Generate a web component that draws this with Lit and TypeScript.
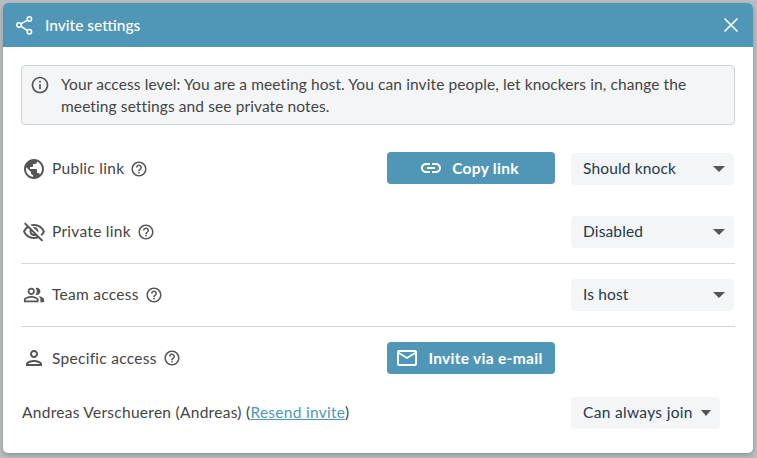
import { LitElement, html, css } from "lit";
import { customElement } from "lit/decorators.js";

const help = html`<svg class="help" viewBox="0 0 24 24"><path fill="#555" d="M11 18h2v-2h-2v2zm1-16C6.48 2 2 6.48 2 12s4.48 10 10 10 10-4.48 10-10S17.52 2 12 2zm0 18c-4.41 0-8-3.59-8-8s3.59-8 8-8 8 3.59 8 8-3.59 8-8 8zm0-14c-2.21 0-4 1.79-4 4h2c0-1.1.9-2 2-2s2 .9 2 2c0 2-3 1.75-3 5h2c0-2.25 3-2.5 3-5 0-2.21-1.79-4-4-4z"/></svg>`;

const icon = (d: string, small = false) => html`<svg class="ri ${small ? "small" : ""}" viewBox="0 0 24 24"><path fill="#555" d=${d}/></svg>`;
const GLOBE = "M12 2C6.48 2 2 6.48 2 12s4.48 10 10 10 10-4.48 10-10S17.52 2 12 2zm-1 17.93c-3.95-.49-7-3.85-7-7.93 0-.62.08-1.21.21-1.79L9 15v1c0 1.1.9 2 2 2v1.93zm6.9-2.54c-.26-.81-1-1.39-1.9-1.39h-1v-3c0-.55-.45-1-1-1H8v-2h2c.55 0 1-.45 1-1V7h2c1.1 0 2-.9 2-2v-.41c2.93 1.19 5 4.06 5 7.41 0 2.08-.8 3.97-2.1 5.39z";
const EYE_OFF = "M12 6c3.79 0 7.17 2.13 8.82 5.5-.59 1.22-1.42 2.27-2.41 3.12l1.41 1.41c1.39-1.23 2.49-2.77 3.18-4.53C21.27 7.11 17 4 12 4c-1.27 0-2.49.2-3.64.57l1.65 1.65C10.66 6.09 11.32 6 12 6zm-1.07 1.14L13 9.21c.57.25 1.03.71 1.28 1.28l2.07 2.07c.08-.34.14-.7.14-1.07C16.5 9.01 14.48 7 12 7c-.37 0-.72.05-1.07.14zM2.01 3.87l2.68 2.68C3.06 7.83 1.77 9.53 1 11.5 2.73 15.89 7 19 12 19c1.52 0 2.98-.29 4.32-.82l3.42 3.42 1.41-1.41L3.42 2.45 2.01 3.87zm7.5 7.5l2.61 2.61c-.04.01-.08.02-.12.02-1.38 0-2.5-1.12-2.5-2.5 0-.05.01-.08.01-.13zm-3.4-3.4l1.75 1.75c-.23.55-.36 1.15-.36 1.78 0 2.48 2.02 4.5 4.5 4.5.63 0 1.23-.13 1.77-.36l.98.98c-.88.24-1.8.38-2.75.38-3.79 0-7.17-2.13-8.82-5.5.7-1.43 1.72-2.61 2.93-3.53z";
const PEOPLE = "M16.67 13.13C18.04 14.06 19 15.32 19 17v3h4v-3c0-2.18-3.57-3.47-6.33-3.87zM15 12c2.21 0 4-1.79 4-4s-1.79-4-4-4c-.47 0-.91.1-1.33.24C14.5 5.27 15 6.58 15 8s-.5 2.73-1.33 3.76c.42.14.86.24 1.33.24zM9 12c2.21 0 4-1.79 4-4s-1.79-4-4-4-4 1.79-4 4 1.79 4 4 4zm0-6c1.1 0 2 .9 2 2s-.9 2-2 2-2-.9-2-2 .9-2 2-2zm0 7c-2.67 0-8 1.34-8 4v3h16v-3c0-2.66-5.33-4-8-4zm6 5H3v-.99C3.2 16.29 6.3 15 9 15s5.8 1.29 6 2v1z";
const PERSON = "M12 6c1.1 0 2 .9 2 2s-.9 2-2 2-2-.9-2-2 .9-2 2-2m0 10c2.7 0 5.8 1.29 6 2H6c.23-.72 3.31-2 6-2m0-12C9.79 4 8 5.79 8 8s1.79 4 4 4 4-1.79 4-4-1.79-4-4-4zm0 10c-2.67 0-8 1.34-8 4v2h16v-2c0-2.66-5.33-4-8-4z";

@customElement("app-root")
export class AppRoot extends LitElement {
  static styles = css`
    :host { display: block; width: 757px; height: 458px; box-sizing: border-box; padding: 3px 4px 5px 3px; background: #b9bfc1; font-family: "Lato", sans-serif; overflow: hidden; }
    * { box-sizing: border-box; }
    .dialog { height: 450px; background: #fff; border-radius: 5px; overflow: hidden; box-shadow: 0 2px 5px rgba(0,0,0,.25); }
    .head { height: 44px; background: #5097b7; color: #fff; display: flex; align-items: center; padding: 0 14px 0 12px; font-size: 15.5px; font-weight: 500; letter-spacing: 0; }
    .head .share { width: 20px; height: 20px; margin-right: 10px; flex: none; }
    .head .title { flex: 1; padding-bottom: 1px; }
    .head .close { width: 16px; height: 16px; }
    .body { padding: 18px 18px 0; }
    .notice { height: 60px; background: #f3f5f7; border: 1px solid #cdd4d8; border-radius: 4px; display: flex; padding: 7px 10px 0 8px; color: #444; font-size: 15.5px; line-height: 22px; letter-spacing: .1px; }
    .notice svg { width: 20px; height: 20px; margin: 2px 11px 0 0; flex: none; }
    .row { display: grid; grid-template-columns: 350px 168px 163px; column-gap: 16px; align-items: center; font-size: 15.5px; letter-spacing: .15px; color: #444; padding: 16px 0 15px; }
    .row.first { margin-top: 12px; }
    .row.first .btn { margin: -1px 0 1px; }
    .row.sep { border-top: 1px solid #d2d8db; padding-top: 15px; }
    .cell { height: 32px; }
    .label { display: flex; align-items: center; height: 32px; letter-spacing: .28px; }
    .label .txt { padding-bottom: 2px; }
    .row.low .label .txt { padding-bottom: 0; }
    .ri { width: 24px; height: 24px; margin: 0 6px 0 1px; flex: none; }
    .ri.small { width: 22px; height: 22px; margin: 0 7px 0 2px; }
    .help { width: 18px; height: 18px; margin-left: 6px; flex: none; }
    .btn { height: 32px; background: #5097b7; color: #fff; border-radius: 4px; display: flex; align-items: center; justify-content: center; font-weight: 700; padding-right: 4px; letter-spacing: .3px; }
    .btn svg { width: 24px; height: 24px; margin-right: 9px; flex: none; }
    .btn .txt { padding-bottom: 1px; }
    .sel { height: 32px; background: #f3f5f7; border-radius: 4px; color: #1f3a4a; display: flex; align-items: center; justify-content: space-between; padding: 0 9px 2px 12px; }
    .caret { width: 0; height: 0; margin-top: 2px; border-left: 6px solid transparent; border-right: 6px solid transparent; border-top: 6px solid #555; }
    .person { display: flex; align-items: center; justify-content: space-between; font-size: 15.5px; letter-spacing: .28px; color: #444; margin-top: 8px; padding: 0 15px 0 1px; }
    .person .who { padding-bottom: 2px; }
    .person a { color: #5097b7; }
    .sel.small { width: 149px; flex: none; letter-spacing: .32px; }
    .sel.small .caret { border-left-width: 5.5px; border-right-width: 5.5px; }
  `;

  private row(ic: unknown, label: string, mid: unknown, value: string | null, cls = "") {
    return html`<div class="row ${cls}">
      <div class="label">${ic}<span class="txt">${label}</span>${help}</div>
      <div class="cell">${mid}</div>
      <div class="cell">${value ? html`<div class="sel"><span>${value}</span><span class="caret"></span></div>` : ""}</div>
    </div>`;
  }

  render() {
    const copy = html`<div class="btn"><svg viewBox="0 0 24 24"><path fill="#fff" d="M3.9 12c0-1.71 1.39-3.1 3.1-3.1h4V7H7c-2.76 0-5 2.24-5 5s2.24 5 5 5h4v-1.9H7c-1.71 0-3.1-1.39-3.1-3.1zM8 13h8v-2H8v2zm9-6h-4v1.9h4c1.71 0 3.1 1.39 3.1 3.1s-1.39 3.1-3.1 3.1h-4V17h4c2.76 0 5-2.24 5-5s-2.24-5-5-5z"/></svg><span class="txt">Copy link</span></div>`;
    const mail = html`<div class="btn"><svg viewBox="0 0 24 24"><path fill="#fff" d="M20 4H4c-1.1 0-1.99.9-1.99 2L2 18c0 1.1.9 2 2 2h16c1.1 0 2-.9 2-2V6c0-1.1-.9-2-2-2zm0 14H4V8l8 5 8-5v10zm-8-7L4 6h16l-8 5z"/></svg><span class="txt">Invite via e-mail</span></div>`;
    return html`<div class="dialog">
      <div class="head">
        <svg class="share" viewBox="0 0 20 20" fill="none" stroke="#fff" stroke-width="1.5"><circle cx="14.4" cy="4" r="2.2"/><circle cx="14.4" cy="16.7" r="2.2"/><circle cx="4" cy="10" r="2.2"/><path d="M5.9 8.9 12.5 5.1M5.9 11.1 12.5 15.6"/></svg>
        <span class="title">Invite settings</span>
        <svg class="close" viewBox="0 0 16 16" stroke="#fff" stroke-width="1.6"><path d="M1.5 1.5 14.5 14.5M14.5 1.5 1.5 14.5"/></svg>
      </div>
      <div class="body">
        <div class="notice">
          <svg viewBox="0 0 24 24"><path fill="#555" d="M11 7h2v2h-2V7zm0 4h2v6h-2v-6zm1-9C6.48 2 2 6.48 2 12s4.48 10 10 10 10-4.48 10-10S17.52 2 12 2zm0 18c-4.41 0-8-3.59-8-8s3.59-8 8-8 8 3.59 8 8-3.59 8-8 8z"/></svg>
          <div>Your access level: You are a meeting host. You can invite people, let knockers in, change the<br>meeting settings and see private notes.</div>
        </div>
        ${this.row(icon(GLOBE), "Public link", copy, "Should knock", "first")}
        ${this.row(icon(EYE_OFF), "Private link", "", "Disabled")}
        ${this.row(icon(PEOPLE, true), "Team access", "", "Is host", "sep")}
        ${this.row(icon(PERSON), "Specific access", mail, null, "sep low")}
        <div class="person">
          <span class="who">Andreas Verschueren (Andreas) (<a href="#">Resend invite</a>)</span>
          <div class="sel small"><span>Can always join</span><span class="caret"></span></div>
        </div>
      </div>
    </div>`;
  }
}
